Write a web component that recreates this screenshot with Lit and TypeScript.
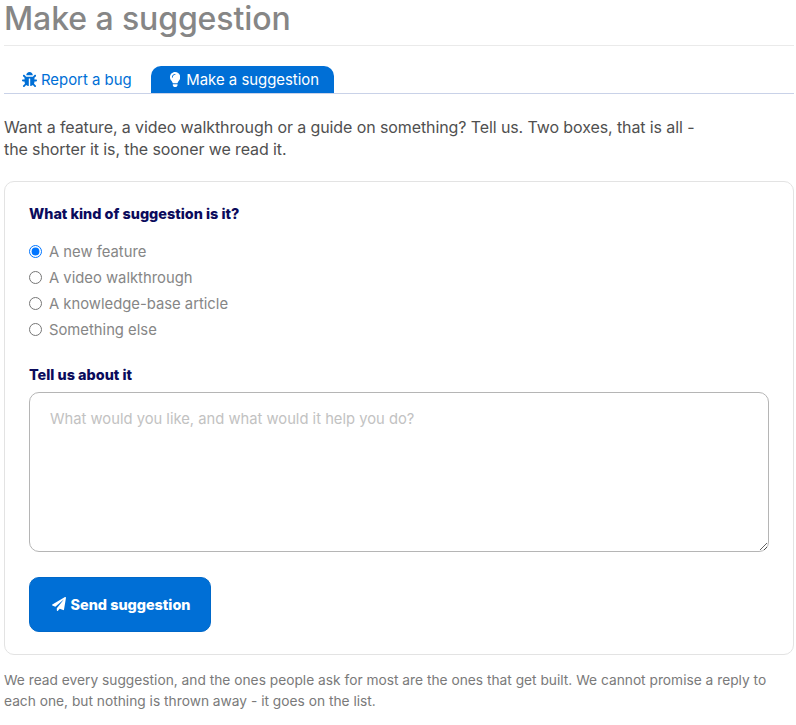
import { LitElement, html, css } from "lit";
import { customElement } from "lit/decorators.js";

@customElement("app-root")
export class AppRoot extends LitElement {
  static styles = css`
    :host { display: block; box-sizing: border-box; width: 796px; height: 725px; padding: 0 2px 0 4px; overflow: hidden; background: #fff; font-family: Inter, "Noto Sans", sans-serif; color: #4f4f4f; }
    * { box-sizing: border-box; }
    h1 { margin: 0; height: 46px; border-bottom: 1px solid #eaeaea; font-size: 32px; line-height: 38px; font-weight: 500; color: #868686; letter-spacing: -0.1px; }
    .tabs { display: flex; margin-top: 20px; height: 28px; border-bottom: 1px solid #c9d2e8; padding-left: 1px; }
    .tab { display: flex; align-items: center; height: 27px; font-size: 14.9px; color: #006fd6; border-radius: 10px 10px 0 0; }
    .tab.bug { width: 146px; padding-left: 17px; gap: 4px; }
    .tab.active { width: 183px; padding-left: 19px; gap: 6px; background: #006fd6; color: #fff; }
    .tab svg { fill: currentColor; height: 15px; width: auto; display: block; }
    .intro { margin: 22px 0 0; font-size: 16px; line-height: 22px; color: #505050; letter-spacing: -0.1px; }
    .card { margin-top: 21px; height: 474px; border: 1px solid #e3e3e3; border-radius: 10px; padding: 23px 24px 24px; }
    .label { margin: 0; font-size: 14.4px; line-height: 18px; font-weight: 800; color: #0b0b5c; }
    .radios { display: flex; flex-direction: column; margin-top: 15px; }
    .radios label { display: flex; align-items: center; gap: 7px; height: 26px; padding-top: 1px; font-size: 14.8px; color: #868686; }
    input[type="radio"] { width: 13px; height: 13px; margin: -1px 0 0; accent-color: #0075ff; }
    .about { margin-top: 24px; }
    textarea { display: block; width: 740px; height: 160px; margin-top: 8px; padding: 15px 20px; border: 1px solid #b5b5b5; border-radius: 10px; font: 14.75px/22px Inter, "Noto Sans", sans-serif; color: #4f4f4f; outline: none; background: #fff; }
    textarea::placeholder { color: #c2c2c2; opacity: 1; }
    .send { display: flex; align-items: center; justify-content: center; gap: 5px; width: 182px; height: 55px; margin-top: 25px; background: #006fd6; color: #fff; border: 1px solid #0068c9; border-radius: 10px; font: 800 14.4px Inter, "Noto Sans", sans-serif; padding: 0 0 1px 2px; }
    .send svg { width: 14px; height: 14px; fill: currentColor; display: block; }
    .foot { margin: 15px 0 0; font-size: 13.76px; line-height: 21px; color: #7a7a7a; }
  `;

  render() {
    return html`
      <h1>Make a suggestion</h1>
      <div class="tabs">
        <div class="tab bug">
          <svg viewBox="0 0 512 512"><path d="M511.988 288.9c-.478 17.43-15.217 31.1-32.653 31.1H424v16c0 21.864-4.882 42.584-13.6 61.145l60.228 60.228c12.496 12.497 12.496 32.758 0 45.255-12.498 12.497-32.759 12.496-45.256 0l-54.736-54.736C345.886 467.965 314.351 480 280 480V236c0-6.627-5.373-12-12-12h-24c-6.627 0-12 5.373-12 12v244c-34.351 0-65.886-12.035-90.636-32.108l-54.736 54.736c-12.498 12.497-32.759 12.496-45.256 0-12.496-12.497-12.496-32.758 0-45.255l60.228-60.228C92.882 378.584 88 357.864 88 336v-16H32.666C15.23 320 .491 306.33.013 288.9-.484 270.816 14.028 256 32 256h56v-58.745l-46.628-46.628c-12.496-12.497-12.496-32.758 0-45.255 12.498-12.497 32.758-12.497 45.256 0L141.255 160h229.489l54.627-54.627c12.498-12.497 32.758-12.497 45.256 0 12.496 12.497 12.496 32.758 0 45.255L424 197.255V256h56c17.972 0 32.484 14.816 31.988 32.9zM257 0c-61.856 0-112 50.144-112 112h224C369 50.144 318.856 0 257 0z"/></svg>
          <span>Report a bug</span>
        </div>
        <div class="tab active">
          <svg viewBox="0 0 352 512"><path d="M96.06 454.35c.01 6.29 1.87 12.45 5.36 17.69l17.09 25.69a31.99 31.99 0 0 0 26.64 14.28h61.71a31.99 31.99 0 0 0 26.64-14.28l17.09-25.69a31.989 31.989 0 0 0 5.36-17.69l.04-38.35H96.01l.05 38.35zM0 176c0 44.37 16.45 84.85 43.56 115.78 16.52 18.85 42.36 58.23 52.21 91.45.04.26.07.52.11.78h160.24c.04-.26.07-.51.11-.78 9.85-33.22 35.69-72.6 52.21-91.45C335.55 260.85 352 220.37 352 176 352 78.61 272.91-.3 175.45 0 73.44.31 0 82.97 0 176zm176-80c-44.11 0-80 35.89-80 80 0 8.84-7.16 16-16 16s-16-7.16-16-16c0-61.76 50.24-112 112-112 8.84 0 16 7.16 16 16s-7.16 16-16 16z"/></svg>
          <span>Make a suggestion</span>
        </div>
      </div>
      <p class="intro">Want a feature, a video walkthrough or a guide on something? Tell us. Two boxes, that is all -<br />the shorter it is, the sooner we read it.</p>
      <div class="card">
        <p class="label">What kind of suggestion is it?</p>
        <div class="radios">
          <label><input type="radio" name="kind" checked />A new feature</label>
          <label><input type="radio" name="kind" />A video walkthrough</label>
          <label><input type="radio" name="kind" />A knowledge-base article</label>
          <label><input type="radio" name="kind" />Something else</label>
        </div>
        <p class="label about">Tell us about it</p>
        <textarea placeholder="What would you like, and what would it help you do?"></textarea>
        <button class="send">
          <svg viewBox="0 0 512 512"><path d="M476 3.2L12.5 270.6c-18.1 10.4-15.8 35.6 2.2 43.2L121 358.4l287.3-253.2c5.5-4.9 13.3 2.6 8.6 8.3L176 407v80.5c0 23.6 28.5 32.9 42.5 15.8L282 426l124.6 52.2c14.2 6 30.4-2.9 33-18.2l72-432C515 7.8 493.3-6.8 476 3.2z"/></svg>
          Send suggestion
        </button>
      </div>
      <p class="foot">We read every suggestion, and the ones people ask for most are the ones that get built. We cannot promise a reply to<br />each one, but nothing is thrown away - it goes on the list.</p>
    `;
  }
}
